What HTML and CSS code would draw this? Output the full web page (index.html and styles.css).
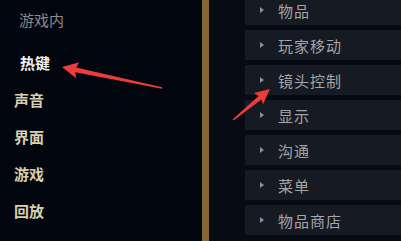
FILE: index.html
```html
<!DOCTYPE html>
<html lang="zh-CN">

<head>
    <meta charset="UTF-8">
    <meta name="viewport" content="width=device-width, initial-scale=1.0">
    <title>设置 - 热键</title>
    <link rel="stylesheet" href="styles.css">
</head>

<body>
    <div class="page">
        <!-- 左侧菜单 -->
        <div class="side">
            <div class="side_title">游戏内</div>
            <div class="side_item side_active">热键</div>
            <div class="side_item">声音</div>
            <div class="side_item">界面</div>
            <div class="side_item">游戏</div>
            <div class="side_item">回放</div>
        </div>
        <div class="side_line"></div>
        <div class="gap"></div>
        <!-- 右侧热键分类 -->
        <div class="groups">
            <div class="group"><i class="arrow"></i>物品</div>
            <div class="group"><i class="arrow"></i>玩家移动</div>
            <div class="group"><i class="arrow"></i>镜头控制</div>
            <div class="group"><i class="arrow"></i>显示</div>
            <div class="group"><i class="arrow"></i>沟通</div>
            <div class="group"><i class="arrow"></i>菜单</div>
            <div class="group"><i class="arrow"></i>物品商店</div>
        </div>
    </div>
    <!-- 标注箭头 -->
    <svg class="marks" width="401" height="241" viewBox="0 0 401 241">
        <polygon points="62,67 79.3,62.3 76.2,67.4 162.1,87.3 161.9,88.8 75.2,72.3 76.1,78.3" fill="#ee3b3b" />
        <polygon points="270,89 254,93 258.6,96 232.5,119.4 233.6,120.6 261.4,99.4 263,104.2" fill="#ee3b3b" />
    </svg>
</body>

</html>
```

FILE: styles.css
```css
* {
    margin: 0;
    padding: 0;
}

body {
    width: 401px;
    height: 241px;
    overflow: hidden;
    background-color: #060a13;
    font-family: "Noto Sans CJK SC", "Noto Sans", sans-serif;
}

.page {
    display: flex;
    height: 241px;
}

.side {
    width: 202px;
    flex-shrink: 0;
    background-color: #02060f;
}

.side_title {
    height: 44px;
    line-height: 40px;
    padding-left: 19px;
    font-size: 15px;
    color: #8c8c8c;
}

.side_item {
    height: 37px;
    line-height: 37px;
    padding-left: 14px;
    font-size: 15px;
    font-weight: 700;
    color: #d8cfac;
}

.side_active {
    padding-left: 20px;
    color: #f4f4f4;
}

.side_line {
    width: 7px;
    flex-shrink: 0;
    background-color: #86652f;
}

.gap {
    width: 36px;
    flex-shrink: 0;
    background-color: #060b14;
}

.groups {
    flex: 1;
    margin-top: -5px;
    display: flex;
    flex-direction: column;
    gap: 5px;
    background-color: #060a12;
}

.group {
    height: 30px;
    display: flex;
    align-items: center;
    padding-left: 15px;
    background-color: #151a23;
    font-size: 15px;
    letter-spacing: 1px;
    color: #a6a6a6;
}

.arrow {
    width: 0;
    height: 0;
    margin-right: 14px;
    border-top: 3px solid transparent;
    border-bottom: 3px solid transparent;
    border-left: 4px solid #8c9098;
}

.marks {
    position: absolute;
    top: 0;
    left: 0;
}
```
